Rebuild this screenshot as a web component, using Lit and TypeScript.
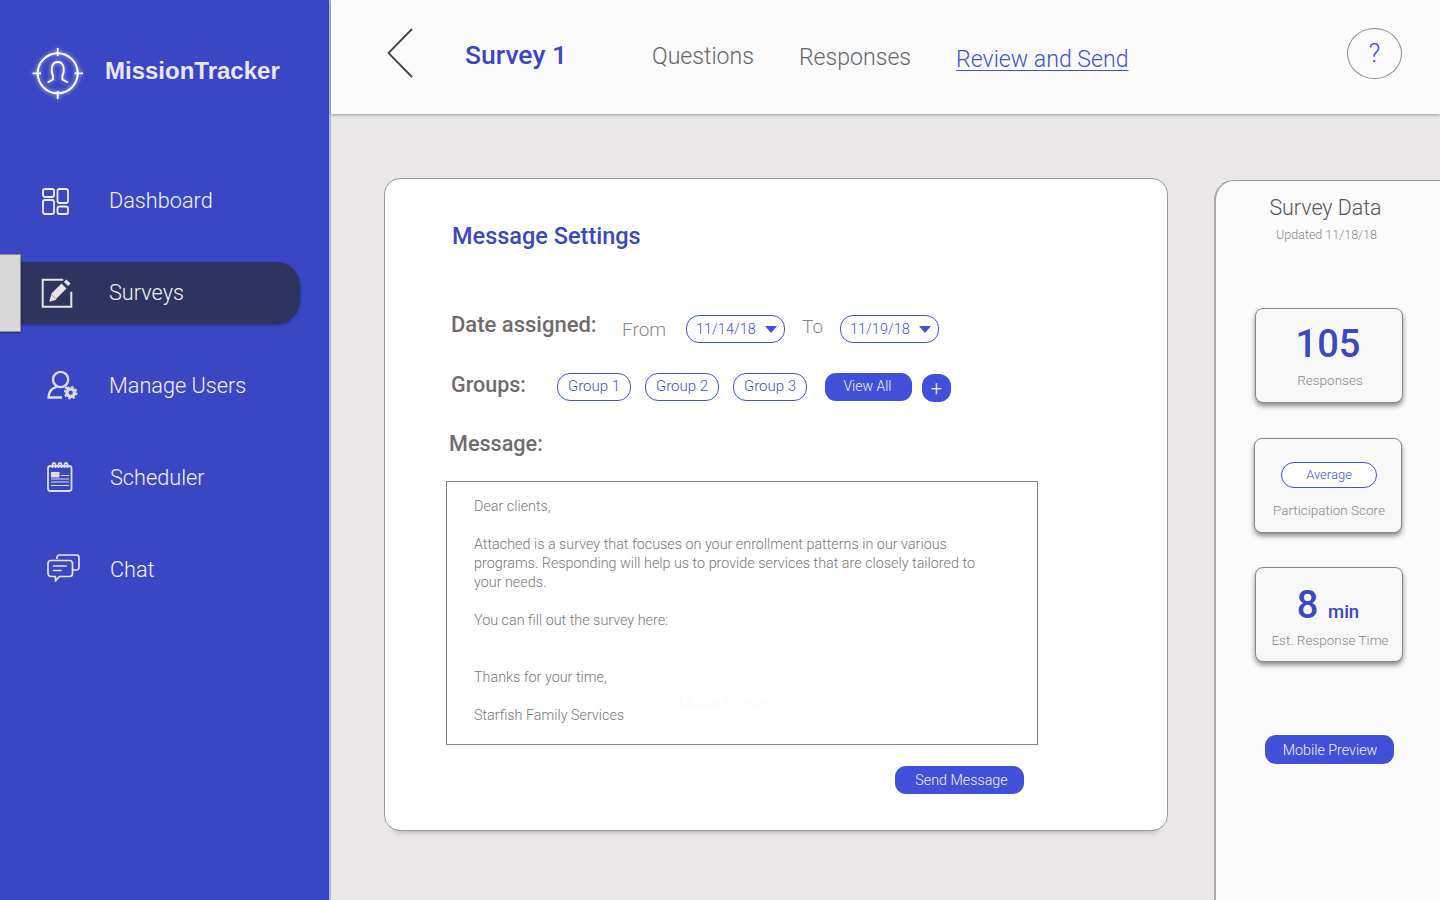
import { LitElement, html, css, svg } from "lit";
import { customElement } from "lit/decorators.js";

const icons: Record<string, unknown> = {
  dash: svg`<g fill="none" stroke="#f0eef4" stroke-width="1.8">
    <rect x="3" y="9" width="11" height="8" rx="2"/><rect x="3" y="20" width="11" height="14" rx="2"/>
    <rect x="17.5" y="9" width="10.5" height="14" rx="2"/><rect x="17.5" y="26.5" width="10.5" height="7.5" rx="2"/></g>`,
  survey: svg`<path d="M23.3 6.7H2.7V33.7H31.3V18.7" fill="none" stroke="#e8e4e4" stroke-width="2"/>
    <path d="M9.3 28.7 11.2 21.5 16.5 26.8Z" fill="#e8e4e4"/>
    <path d="M13.5 23.5 24 13" stroke="#e8e4e4" stroke-width="7" fill="none"/>
    <path d="M26 11 28.5 8.5" stroke="#e8e4e4" stroke-width="6" fill="none"/>`,
  users: svg`<g fill="none" stroke="#dedcdf" stroke-width="2.4"><circle cx="20.6" cy="14.5" r="7.6"/>
    <path d="M22 32.5H8.6c0-6.4 3.6-9.4 8-10.6M25 22.3c1 .3 1.7.6 2.4 1"/></g>
    <circle cx="30.7" cy="27.7" r="3.8" fill="none" stroke="#dedcdf" stroke-width="3.4"/>
    <circle cx="30.7" cy="27.7" r="6" fill="none" stroke="#dedcdf" stroke-width="1.6" stroke-dasharray="2.4 2.3"/>`,
  sched: svg`<g fill="none" stroke="#dedcdf" stroke-width="1.8"><rect x="8" y="9" width="23.5" height="25" rx="2.5"/>
    <path d="M12.5 11V7.5a1.5 1.5 0 0 1 3 0V11M18.5 11V7.5a1.5 1.5 0 0 1 3 0V11M24.5 11V7.5a1.5 1.5 0 0 1 3 0V11"/>
    <path d="M11 25H29M11 28.5H29M11 22H29M21 18.5H29" stroke-width="1.2"/></g>
    <rect x="11" y="15" width="8.5" height="5.5" fill="#dedcdf"/>`,
  chat: svg`<g fill="none" stroke="#e8e6f0" stroke-width="1.7" stroke-linejoin="round">
    <path d="M12 11.5H29.5a3 3 0 0 1 3 3V24.5a3 3 0 0 1-3 3H19.5L15.5 32V27.5H11a3 3 0 0 1-3-3V14.5a3 3 0 0 1 3-3Z"/>
    <path d="M17 10V8.5a2.5 2.5 0 0 1 2.5-2.5H36.5a2.5 2.5 0 0 1 2.5 2.5V18.5a2.5 2.5 0 0 1-2.5 2.5H33"/>
    <path d="M13.5 17H26M13.5 21.5H21" stroke-linecap="round"/></g>`,
};

const NAV = [
  { id: "dash", label: "Dashboard", gap: 29 },
  { id: "survey", label: "Surveys", gap: 29, active: true },
  { id: "users", label: "Manage Users", gap: 29 },
  { id: "sched", label: "Scheduler", gap: 30 },
  { id: "chat", label: "Chat", gap: 30 },
];

@customElement("app-root")
export class AppRoot extends LitElement {
  static styles = css`
    :host { display: block; width: 1440px; height: 900px; overflow: hidden; font-family: Roboto, "Liberation Sans", sans-serif; font-weight: 300; }
    * { box-sizing: border-box; }
    .app { display: flex; width: 1440px; height: 900px; background: #eae8e9; }
    .side { width: 331px; flex: none; height: 900px; background: #3a47c4; border-right: 2px solid #b9b6cf; color: #f4f3f8; position: relative; }
    .logo { display: flex; align-items: center; height: 60px; margin-top: 43px; padding-left: 30px; }
    .logo svg { width: 56px; height: 60px; filter: drop-shadow(0 0 2px rgba(255,255,255,.7)); }
    .brand { font: 700 24px "Liberation Sans", sans-serif; color: #e8e6ea; margin-left: 19px; margin-top: -4px; }
    nav { display: flex; flex-direction: column; gap: 30px; margin-top: 67px; }
    .item { display: flex; align-items: center; height: 62px; width: 300px; padding-left: 40px; font-size: 21.7px; position: relative; }
    .item:first-child { padding-bottom: 2px; }
    .item svg { width: 40px; height: 40px; flex: none; }
    .item.active { background: #2e3360; border-radius: 0 24px 24px 0; box-shadow: 0 1px 3px rgba(20,20,70,.5); }
    .item.active span { margin-bottom: 2px; }
    .tab { position: absolute; left: -1px; top: -8px; width: 22px; height: 78px; background: #d8d8d8; border: 1px solid #8d8d8d; box-shadow: 0 1px 2px rgba(0,0,0,.4); }
    .main { flex: 1; min-width: 0; display: flex; flex-direction: column; }
    header { height: 114px; flex: none; background: #fbfbfb; box-shadow: 0 1px 3px rgba(0,0,0,.35); display: flex; align-items: center; position: relative; padding-left: 55px; padding-right: 38px; }
    .back { width: 28px; height: 50px; flex: none; margin-bottom: 8px; }
    .title { font: 500 26.5px Roboto, "Liberation Sans", sans-serif; color: #3a47c4; margin-left: 51px; width: 187px; margin-bottom: 6px; }
    .tabs { display: flex; gap: 45px; font-size: 23.1px; color: #666; flex: 1; align-items: center; }
    .tabs span:nth-child(1) { margin-bottom: 2px; }
    .tabs span:nth-child(3) { color: #4150d8; text-decoration: underline; text-underline-offset: 3px; text-decoration-thickness: 1px; margin-top: 4px; }
    .help { width: 55px; height: 51px; border-radius: 50%; border: 1px solid #8c8c8c; display: flex; align-items: center; justify-content: center; color: #4150d8; font-size: 26px; margin-bottom: 8px; }
    .body { flex: 1; display: flex; padding: 64px 0 0 53px; gap: 46px; min-height: 0; }
    .card { width: 784px; height: 653px; flex: none; background: #fff; border: 1px solid #999; border-radius: 16px; box-shadow: 0 9px 6px -8px rgba(0,0,0,.25); padding: 41px 0 0 66px; display: flex; flex-direction: column; position: relative; }
    h2 { margin: 0 0 0 1px; font: 500 23.5px/32px Roboto, "Liberation Sans", sans-serif; color: #3a47c4; height: 30px; }
    .row { display: flex; align-items: center; height: 28px; }
    .lab { font: 500 22px/28px Roboto, "Liberation Sans", sans-serif; color: #6f6b6b; }
    .date { margin-top: 65px; }
    .date .lab { width: 171px; margin-bottom: 8px; }
    .txt { font-size: 19px; color: #888; }
    .to { width: 38px; margin: 0 0 6px 17px; }
    .from { width: 64px; }
    .pill { height: 28px; border: 1.5px solid #4450d8; border-radius: 13px; color: #4150d8; display: flex; align-items: center; justify-content: center; font-size: 15px; background: #fff; flex: none; }
    .dpill { width: 99px; gap: 9px; font-size: 14.5px; justify-content: flex-start; padding-left: 9px; }
    .dpill i { border-left: 6.5px solid transparent; border-right: 6.5px solid transparent; border-top: 7px solid #4150d8; }
    .groups { margin-top: 30px; }
    .groups .lab { width: 106px; margin-bottom: 4px; font-size: 21.5px; }
    .gp { width: 74px; margin-right: 14px; padding-bottom: 2px; }
    .fill { background: #4150d8; color: #f2f2ff; border: none; border-radius: 11px; display: flex; align-items: center; justify-content: center; font-size: 14.3px; flex: none; }
    .view { width: 87px; height: 28px; margin-left: 4px; font-size: 14px; padding: 0 2px 2px 0; }
    .plus { width: 29px; height: 28px; margin: 2px 0 0 10px; border-radius: 12px; font-size: 20px; }
    .msg { margin: 29px 0 0 -2px; height: 28px; font-size: 21.6px; }
    .box { width: 592px; height: 264px; border: 1px solid #888; margin: 23px 0 0 -5px; padding: 15px 27px; font-size: 14.35px; line-height: 19px; color: #777; position: relative; }
    .box p { margin: 0 0 19px; width: fit-content; }
    .box p.wide { margin-bottom: 38px; }
    .ghost { position: absolute; left: 232px; top: 211px; color: #fbfbfb; font-size: 14.3px; }
    .send { width: 129px; height: 28px; margin: 21px 0 0 444px; padding-left: 4px; }
    .panel { flex: 1; min-width: 0; margin-top: 2px; background: #fbfbfb; border-left: 2px solid #aaa8a8; border-top: 1px solid #999; border-top-left-radius: 20px; display: flex; flex-direction: column; align-items: center; }
    .ph { font-size: 21.4px; color: #555; margin-top: 13px; line-height: 28px; margin-right: 5px; }
    .upd { font-size: 12.5px; color: #888; line-height: 16px; margin-top: 5px; margin-left: -3px; }
    .stat { width: 148px; height: 95px; background: #f8f8f8; border: 1px solid #888; border-radius: 8px; box-shadow: 0 3px 5px rgba(0,0,0,.45); display: flex; flex-direction: column; align-items: center; color: #888; font-size: 13.5px; padding-left: 2px; }
    .big { font: 500 38px/44px Roboto, "Liberation Sans", sans-serif; color: #3a47c4; margin: 13px 4px 0 0; height: 44px; }
    .big small { font-size: 18.5px; margin-left: 5px; }
    .stat .l { margin-top: 5px; line-height: 18px; }
    .s1 { margin-top: 65px; margin-left: 2px; }
    .s2 { margin-top: 35px; }
    .s3 { margin-top: 34px; margin-left: 2px; }
    .avg { width: 96px; height: 26px; margin: 23px 0 0 0; font-size: 13px; padding-bottom: 2px; }
    .s2 .l { margin-top: 13px; }
    .s3 .big { margin-top: 15px; }
    .s3 .l { margin-top: 4px; }
    .mob { width: 129px; height: 29px; margin-top: 73px; margin-left: 2px; padding-left: 2px; }
  `;

  render() {
    return html`<div class="app">
      <aside class="side">
        <div class="logo">
          <svg viewBox="0 0 56 60" fill="none" stroke="#fff" stroke-width="2">
            <circle cx="27.7" cy="30.3" r="20"/>
            <path d="M27.7 5V13M27.7 48V56M2.5 30.3H11M44.5 30.3H53" stroke-width="1.8"/>
            <path d="M17.5 39.5 23 36.5V33C20.5 28 21 19 27.7 19S35 28 32.4 33V36.5L38 39.5" stroke-width="1.8"/>
          </svg>
          <span class="brand">MissionTracker</span>
        </div>
        <nav>
          ${NAV.map((n) => html`<div class="item ${n.active ? "active" : ""}">
            ${n.active ? html`<div class="tab"></div>` : ""}
            <svg viewBox="0 0 40 40">${icons[n.id]}</svg>
            <span style="margin-left:${n.gap}px">${n.label}</span>
          </div>`)}
        </nav>
      </aside>
      <div class="main">
        <header>
          <svg class="back" viewBox="0 0 28 50" fill="none" stroke="#444" stroke-width="1.8"><path d="M26 1 2.5 25 26 49"/></svg>
          <div class="title">Survey 1</div>
          <div class="tabs"><span>Questions</span><span>Responses</span><span>Review and Send</span></div>
          <div class="help">?</div>
        </header>
        <div class="body">
          <section class="card">
            <h2>Message Settings</h2>
            <div class="row date">
              <span class="lab">Date assigned:</span>
              <span class="txt from">From</span>
              <span class="pill dpill">11/14/18 <i></i></span>
              <span class="txt to">To</span>
              <span class="pill dpill">11/19/18 <i></i></span>
            </div>
            <div class="row groups">
              <span class="lab">Groups:</span>
              <span class="pill gp">Group 1</span><span class="pill gp">Group 2</span><span class="pill gp">Group 3</span>
              <span class="fill view">View All</span><span class="fill plus">+</span>
            </div>
            <div class="lab msg">Message:</div>
            <div class="box">
              <p>Dear clients,</p>
              <p>Attached is a survey that focuses on your enrollment patterns in our various<br>programs. Responding will help us to provide services that are closely tailored to<br>your needs.</p>
              <p class="wide">You can fill out the survey here:</p>
              <p>Thanks for your time,</p>
              <p>Starfish Family Services</p>
              <span class="ghost">Mobile Preview</span>
            </div>
            <div class="fill send">Send Message</div>
          </section>
          <aside class="panel">
            <div class="ph">Survey Data</div>
            <div class="upd">Updated 11/18/18</div>
            <div class="stat s1"><div class="big">105</div><div class="l">Responses</div></div>
            <div class="stat s2"><div class="pill avg">Average</div><div class="l">Participation Score</div></div>
            <div class="stat s3"><div class="big">8<small> min</small></div><div class="l">Est. Response Time</div></div>
            <div class="fill mob">Mobile Preview</div>
          </aside>
        </div>
      </div>
    </div>`;
  }
}
